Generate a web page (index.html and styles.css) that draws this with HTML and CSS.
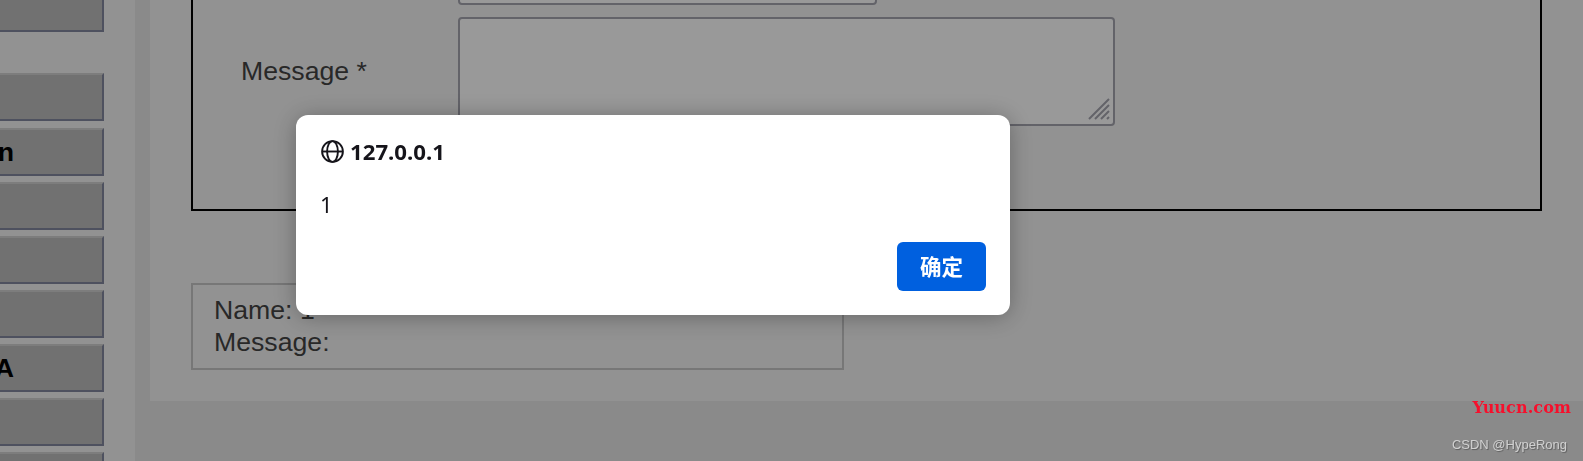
FILE: index.html
```html
<!DOCTYPE html>
<html lang="en">
<head>
<meta charset="utf-8">
<title>DVWA alert</title>
<link rel="stylesheet" href="styles.css">
</head>
<body>
<div class="page">
  <nav class="sidebar">
    <div class="menu-group">
      <div class="menu-item"></div>
    </div>
    <div class="menu-group menu-group-next">
      <div class="menu-item"></div>
      <div class="menu-item">Command Injection</div>
      <div class="menu-item"></div>
      <div class="menu-item"></div>
      <div class="menu-item"></div>
      <div class="menu-item">Insecure CAPTCHA</div>
      <div class="menu-item"></div>
      <div class="menu-item"></div>
    </div>
  </nav>
  <main class="panel">
    <form class="form-box">
      <div class="label"></div>
      <div class="name-input"></div>
      <div class="label">Message *</div>
      <div class="message-input">
        <svg class="resizer" viewBox="0 0 22 22" width="22" height="22" aria-hidden="true">
          <path d="M1 21 21 1M7 21 21 7M13 21 21 13M19 21 21 19"></path>
        </svg>
      </div>
    </form>
    <div class="result">Name: 1<br>Message:</div>
  </main>
</div>
<div class="overlay"></div>
<section class="dialog">
  <header class="dialog-title">
    <svg class="globe" viewBox="0 0 23 23" width="23" height="23" aria-hidden="true">
      <circle cx="11.5" cy="11.5" r="10.4"></circle>
      <ellipse cx="11.5" cy="11.5" rx="5.4" ry="10.4"></ellipse>
      <path d="M1 11.5h21"></path>
    </svg>
    <span>127.0.0.1</span>
  </header>
  <p class="dialog-text">1</p>
  <footer class="dialog-actions">
    <button class="ok" type="button">确定</button>
  </footer>
</section>
<div class="mark-site">Yuucn.com</div>
<div class="mark-author">CSDN @HypeRong</div>
</body>
</html>
```

FILE: styles.css
```css
html, body {
  margin: 0;
  height: 461px;
  overflow: hidden;
}
body {
  background: #e7e7e7;
  font-family: "Liberation Sans", Arial, sans-serif;
  color: #444;
}
.page {
  display: flex;
  height: 521px;
  margin-top: -60px;
}
.sidebar {
  width: 135px;
  flex: none;
  box-sizing: border-box;
  padding: 44px 31px 0 0;
  background: #f4f4f4;
  overflow: hidden;
}
.menu-group-next {
  margin-top: 41.4px;
}
.menu-item {
  box-sizing: border-box;
  width: 400px;
  height: 48px;
  margin-left: -296px;
  margin-bottom: 6.15px;
  padding-right: 88px;
  background: #bcbcbd;
  border-top: 2px solid #d0d0d0;
  border-right: 2px solid #82879f;
  border-bottom: 2px solid #82879f;
  text-align: right;
  font-size: 26.67px;
  font-weight: 700;
  line-height: 44px;
  color: #000;
  white-space: nowrap;
}
.panel {
  flex: 1;
  align-self: flex-start;
  margin-left: 15px;
  padding: 0 41px 31px;
  background: #f4f4f4;
  font-size: 26.67px;
}
.form-box {
  box-sizing: border-box;
  height: 271px;
  border: 2px solid #000;
  border-top: 0;
  display: grid;
  grid-template-columns: 265px 1fr;
  grid-template-rows: 65px 109px;
  row-gap: 12px;
}
.label {
  display: flex;
  align-items: center;
  padding-left: 48px;
  line-height: 31px;
}
.name-input {
  box-sizing: border-box;
  width: 419px;
  background: #fff;
  border: 2px solid #a5a5af;
  border-radius: 4px;
}
.message-input {
  box-sizing: border-box;
  position: relative;
  width: 657px;
  background: #fff;
  border: 2px solid #a5a5af;
  border-radius: 4px;
}
.resizer {
  position: absolute;
  right: 3px;
  bottom: 4px;
  fill: none;
  stroke: #a5a5af;
  stroke-width: 2;
}
.result {
  box-sizing: border-box;
  width: 653px;
  height: 87px;
  margin-top: 72px;
  padding: 9px 21px;
  border: 2px solid #c6c6c7;
  line-height: 32px;
  white-space: nowrap;
}
.overlay {
  position: fixed;
  inset: 0;
  background: rgba(0, 0, 0, 0.4);
}
.dialog {
  position: fixed;
  left: 296px;
  top: 115px;
  width: 714px;
  height: 200px;
  box-sizing: border-box;
  padding: 24px 24px 24px 25px;
  display: flex;
  flex-direction: column;
  background: #fff;
  border-radius: 12px;
  box-shadow: 0 2px 24px rgba(0, 0, 0, 0.3);
  font-family: "Noto Sans", "Noto Sans CJK SC", sans-serif;
  color: #15141a;
}
.dialog-title {
  display: flex;
  align-items: center;
  gap: 6px;
  height: 25px;
  font-size: 22.2px;
  font-weight: 700;
}
.globe {
  flex: none;
  fill: none;
  stroke: #15141a;
  stroke-width: 1.9;
}
.dialog-text {
  margin: 26px 0 0 -1px;
  font-size: 22px;
  line-height: 28px;
}
.dialog-actions {
  margin-top: auto;
  display: flex;
  justify-content: flex-end;
}
.ok {
  width: 89px;
  height: 49px;
  padding: 0 0 2px;
  border: 0;
  border-radius: 6px;
  background: #0060df;
  color: #fff;
  font-family: "Noto Sans CJK SC", sans-serif;
  font-size: 21.5px;
  font-weight: 700;
}
.mark-site {
  position: fixed;
  right: 12px;
  top: 398px;
  color: #f5102c;
  font-family: "DejaVu Serif", serif;
  font-size: 16px;
  font-weight: 700;
  letter-spacing: 0.1px;
  line-height: 20px;
}
.mark-author {
  position: fixed;
  right: 16px;
  top: 437px;
  color: #d0d0d0;
  font-family: "Liberation Sans", sans-serif;
  font-size: 13px;
  line-height: 16px;
  text-shadow: 1px 1px 1px rgba(0, 0, 0, 0.35);
}
```
